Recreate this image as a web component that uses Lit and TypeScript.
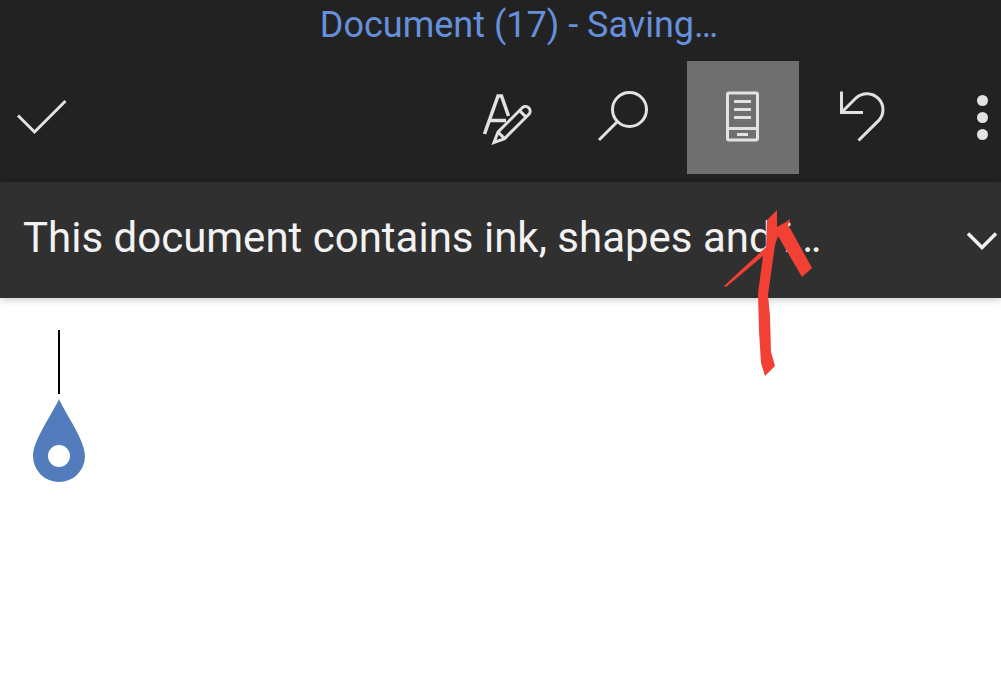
import { LitElement, html, css } from "lit";
import { customElement } from "lit/decorators.js";

@customElement("app-root")
export class AppRoot extends LitElement {
  static styles = css`
    :host {
      display: flex;
      flex-direction: column;
      position: relative;
      min-height: 100vh;
      overflow: hidden;
      background: #fff;
      font-family: Roboto, sans-serif;
    }
    * {
      box-sizing: border-box;
    }
    button {
      border: 0;
      margin: 0;
      padding: 0;
      background: none;
      color: inherit;
      font: inherit;
      cursor: pointer;
    }
    svg {
      display: block;
      fill: none;
      stroke: currentColor;
    }
    .header {
      background: #222;
      color: #e2e2e2;
      padding-bottom: 8px;
    }
    .title {
      margin: 0;
      padding: 1px 0 12px 37px;
      font-size: 36px;
      line-height: 48px;
      font-weight: 400;
      text-align: center;
      color: #6690dc;
    }
    .toolbar {
      display: flex;
      gap: 8px;
    }
    .tool {
      flex: none;
      width: 112px;
      height: 113px;
      display: flex;
      align-items: center;
      justify-content: center;
    }
    .done {
      width: 84px;
      margin-right: auto;
    }
    .active {
      background: #6f6f6f;
    }
    .more {
      width: 74px;
      justify-content: flex-end;
      padding-right: 8px;
    }
    .message {
      display: flex;
      align-items: center;
      justify-content: space-between;
      height: 116px;
      padding-left: 23px;
      background: #303030;
      color: #f2f2f2;
      box-shadow: 0 1px 8px rgba(0, 0, 0, 0.25);
    }
    .message p {
      margin: 0;
      padding-bottom: 4px;
      font-size: 42px;
      line-height: 56px;
      white-space: nowrap;
    }
    .page {
      flex: 1;
      padding: 32px 32px 0;
    }
    .caret {
      width: 2px;
      height: 64px;
      margin-left: 26px;
      background: #000;
    }
    .handle {
      margin-top: 4px;
      fill: #527cbc;
      stroke: none;
    }
    .ink {
      position: absolute;
      left: 720px;
      top: 206px;
      fill: #f24035;
      stroke: none;
      pointer-events: none;
    }
  `;

  render() {
    return html`
      <header class="header">
        <h1 class="title">Document (17) - Saving…</h1>
        <div class="toolbar" role="toolbar" aria-label="Document">
          <button class="tool done" aria-label="Done">
            <svg width="84" height="72" viewBox="0 0 84 72" stroke-width="3">
              <path d="M18 33.500 34.500 50 65.500 19" />
            </svg>
          </button>
          <button class="tool" aria-label="Edit">
            <svg width="64" height="64" viewBox="0 0 64 64" stroke-width="3">
              <path d="M13.500 48 27 10h3.500l7 20M19 34.500h16" stroke-width="3.500" />
              <path
                d="m23 56.500 4-10.500 24.500-24.500a4.700 4.700 0 0 1 6.600 6.600L33.600 52.600zM27 46l6.600 6.600M48.500 24.500l6.600 6.600"
              />
            </svg>
          </button>
          <button class="tool" aria-label="Find">
            <svg width="64" height="64" viewBox="0 0 64 64" stroke-width="3">
              <circle cx="38.500" cy="23.500" r="17" />
              <path d="M26.500 35.500 8 54" />
            </svg>
          </button>
          <button class="tool active" aria-label="Mobile view" aria-pressed="true">
            <svg width="64" height="64" viewBox="0 0 64 64" stroke-width="3">
              <rect x="16.500" y="7" width="30" height="47" rx="1.500" />
              <path d="M17 42.500h29M23 15.500h17M23 23.500h17M23 31.500h17M26 48.500h11" />
            </svg>
          </button>
          <button class="tool" aria-label="Undo">
            <svg width="64" height="64" viewBox="0 0 64 64" stroke-width="3">
              <path d="M10.500 5.500v21H32M11.500 25.500 25.200 11.800A16 16 0 0 1 47.800 34.400L27.500 54.500" />
            </svg>
          </button>
          <button class="tool more" aria-label="More options">
            <svg width="22" height="64" viewBox="0 0 22 64">
              <g fill="currentColor" stroke="none">
                <circle cx="11.500" cy="14.500" r="5.500" />
                <circle cx="11.500" cy="31.500" r="5.500" />
                <circle cx="11.500" cy="48.500" r="5.500" />
              </g>
            </svg>
          </button>
        </div>
      </header>
      <section class="message">
        <p>This document contains ink, shapes and i…</p>
        <button aria-label="Expand message">
          <svg width="40" height="40" viewBox="0 0 40 40" stroke-width="3.500">
            <path d="m7 13.500 14 14 14-14" />
          </svg>
        </button>
      </section>
      <main class="page">
        <div class="caret"></div>
        <svg class="handle" width="54" height="85" viewBox="0 0 54 85">
          <path
            fill-rule="evenodd"
            d="M27 1C33 15 53 42 53 58a26 26 0 0 1-52 0C1 42 21 15 27 1zM27 47a11 11 0 1 0 0 22 11 11 0 0 0 0-22z"
          />
        </svg>
      </main>
      <svg class="ink" width="96" height="174" viewBox="0 0 96 174">
        <path
          d="M57 4 47 14 46 41 4 80 6 81 43 50 38 87 39 125 41 157 45 170 55 160 51 146 50 110 48 89 55 39 58 30 82 71 92 62 71 24 68 20 70 13 66 16 57 21z"
        />
      </svg>
    `;
  }
}
